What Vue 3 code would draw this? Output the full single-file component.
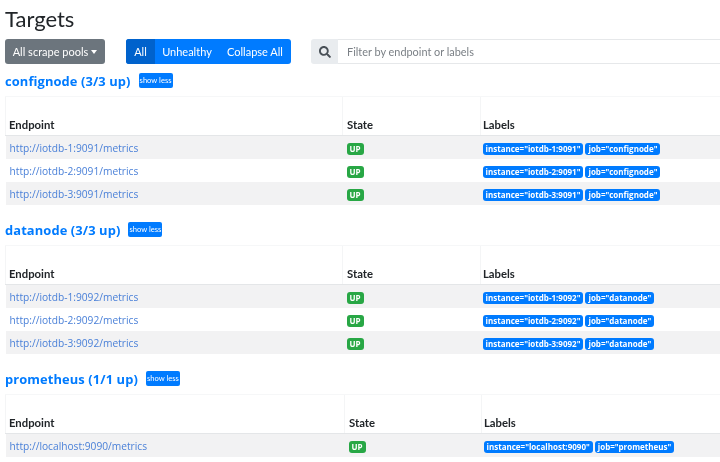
<script setup>
const pools = [
  { name: 'configNode', title: 'confignode (3/3 up)', cols: [337, 138], rows: [
    ['http://iotdb-1:9091/metrics', 'instance="iotdb-1:9091"', 'job="confignode"'],
    ['http://iotdb-2:9091/metrics', 'instance="iotdb-2:9091"', 'job="confignode"'],
    ['http://iotdb-3:9091/metrics', 'instance="iotdb-3:9091"', 'job="confignode"'],
  ] },
  { name: 'datanode', title: 'datanode (3/3 up)', cols: [337, 138], rows: [
    ['http://iotdb-1:9092/metrics', 'instance="iotdb-1:9092"', 'job="datanode"'],
    ['http://iotdb-2:9092/metrics', 'instance="iotdb-2:9092"', 'job="datanode"'],
    ['http://iotdb-3:9092/metrics', 'instance="iotdb-3:9092"', 'job="datanode"'],
  ] },
  { name: 'prometheus', title: 'prometheus (1/1 up)', cols: [339, 137], rows: [
    ['http://localhost:9090/metrics', 'instance="localhost:9090"', 'job="prometheus"'],
  ] },
]
</script>

<template>
  <main class="page">
    <h1 class="title">Targets</h1>
    <div class="toolbar">
      <button class="btn pools">All scrape pools<span class="caret"></span></button>
      <div class="group">
        <button class="btn seg active">All</button>
        <button class="btn seg">Unhealthy</button>
        <button class="btn seg">Collapse All</button>
      </div>
      <div class="search">
        <span class="addon">
          <svg width="12" height="12" viewBox="0 0 512 512"><path fill="#495057" d="M505 442.700L405.300 343c-4.500-4.500-10.600-7-17-7H372c27.600-35.300 44-79.700 44-128C416 93.100 322.900 0 208 0S0 93.100 0 208s93.100 208 208 208c48.300 0 92.700-16.400 128-44v16.300c0 6.400 2.500 12.500 7 17l99.700 99.700c9.400 9.400 24.600 9.400 33.900 0l28.300-28.300c9.400-9.400 9.400-24.600.1-34zM208 336c-70.700 0-128-57.200-128-128 0-70.700 57.200-128 128-128 70.700 0 128 57.200 128 128 0 70.700-57.200 128-128 128z"/></svg>
        </span>
        <span class="input">Filter by endpoint or labels</span>
      </div>
    </div>

    <section v-for="p in pools" :key="p.name" class="pool">
      <div class="pool-head">
        <a class="pool-link">{{ p.title }}</a>
        <button class="less">show less</button>
      </div>
      <table class="tbl">
        <colgroup>
          <col :style="{ width: p.cols[0] + 'px' }" />
          <col :style="{ width: p.cols[1] + 'px' }" />
          <col />
        </colgroup>
        <thead>
          <tr><th>Endpoint</th><th>State</th><th>Labels</th></tr>
        </thead>
        <tbody>
          <tr v-for="r in p.rows" :key="r[0]">
            <td><a class="ep">{{ r[0] }}</a></td>
            <td><span class="badge up">UP</span></td>
            <td class="labels">
              <span class="badge lab">{{ r[1] }}</span>
              <span class="badge lab">{{ r[2] }}</span>
            </td>
          </tr>
        </tbody>
      </table>
    </section>
  </main>
</template>

<style>
html, body { margin: 0; background: #fff; overflow: hidden; }
</style>

<style scoped>
.page {
  width: 720px;
  height: 462px;
  overflow: hidden;
  box-sizing: border-box;
  padding-left: 5px;
  font-family: Lato, "Open Sans", sans-serif;
  color: #212529;
  filter: blur(0.35px);
}
.title {
  margin: 0;
  height: 39px;
  font-size: 22px;
  line-height: 38px;
  font-weight: 400;
}
.toolbar { display: flex; height: 25px; width: 760px; }
.btn {
  border: 0;
  margin: 0;
  color: #fff;
  font-family: inherit;
  font-size: 11px;
  line-height: 25px;
  height: 25px;
  padding: 0;
  white-space: nowrap;
}
.pools {
  width: 100px;
  background: #6c757d;
  border-radius: 3px;
  margin-right: 21px;
}
.caret {
  display: inline-block;
  margin-left: 3px;
  vertical-align: 2px;
  border-top: 4px solid #fff;
  border-left: 3.500px solid transparent;
  border-right: 3.500px solid transparent;
}
.group { display: flex; width: 165px; margin-right: 20px; background: #007bff; border-radius: 3px; overflow: hidden; }
.seg { background: transparent; }
.seg:nth-child(1) { width: 29px; background: #0062cc; }
.seg:nth-child(2) { width: 64px; }
.seg:nth-child(3) { width: 72px; }
.search { display: flex; flex: 1; }
.addon {
  width: 27px;
  background: #e9ecef;
  border-radius: 3px 0 0 3px;
  display: flex;
  align-items: center;
  justify-content: center;
}
.input {
  flex: 1;
  border: 1px solid #e6e8ea;
  border-left: 0;
  padding-left: 9px;
  color: #7b8086;
  font-size: 10.900px;
  line-height: 23px;
}
.pool { height: 149px; }
.pool-head { display: flex; align-items: center; height: 32px; padding-top: 1px; box-sizing: border-box; }
.pool-link {
  color: #007bff;
  font-family: "Open Sans", sans-serif;
  font-size: 12.900px;
  font-weight: 700;
  letter-spacing: 0.1px;
}
.less {
  margin-left: 8px;
  width: 34px;
  height: 15px;
  padding: 0;
  border: 0;
  border-radius: 2px;
  background: #007bff;
  color: #fff;
  font-family: inherit;
  font-size: 7.600px;
  line-height: 15px;
  white-space: nowrap;
}
.tbl {
  table-layout: fixed;
  border-collapse: collapse;
  width: 715px;
}
.tbl th {
  height: 39px;
  box-sizing: border-box;
  padding: 0 0 3px 4px;
  vertical-align: bottom;
  text-align: left;
  font-size: 11.300px;
  font-weight: 700;
  line-height: 14px;
  border-bottom: 1px solid #e4e6e8;
  border-left: 1px solid #f4f5f6;
  border-top: 1px solid #f6f7f8;
}
.tbl th:nth-child(1) { padding-left: 3px; }
.tbl th:nth-child(3), .tbl td:nth-child(3) { padding-left: 2px; }
.tbl td {
  height: 23px;
  box-sizing: border-box;
  padding: 2px 0 0 4px;
  font-size: 10.200px;
  vertical-align: middle;
  border-bottom: 0;
}
.tbl tbody tr:nth-child(odd) td { background: #f2f2f3; }
.ep { color: #4a80d8; font-family: "Open Sans", sans-serif; }
.badge {
  display: inline-block;
  height: 12px;
  line-height: 12px;
  border-radius: 3px;
  color: #fff;
  font-family: "Open Sans", sans-serif;
  font-size: 8px;
  font-weight: 700;
  white-space: nowrap;
}
.up { background: #28a745; padding: 0 3px; }
.lab { background: #007bff; padding: 0 3px; margin-right: 2px; }
</style>
